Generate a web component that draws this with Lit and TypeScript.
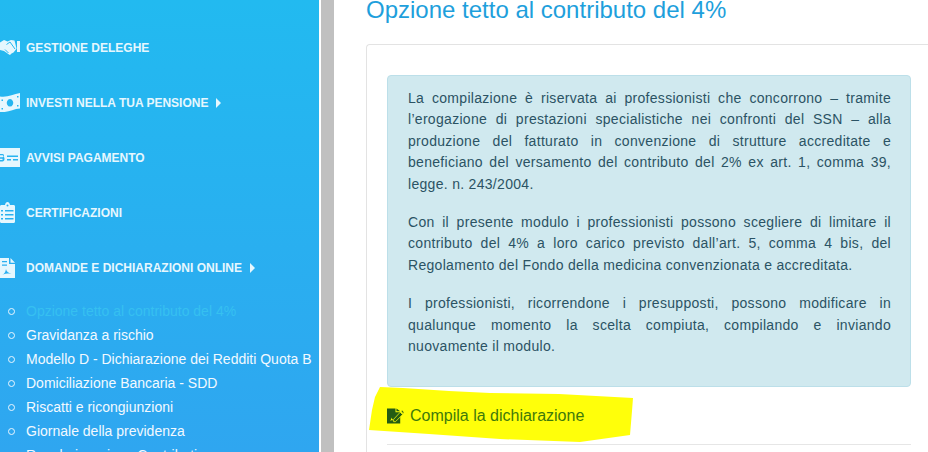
import { LitElement, html, css, svg } from "lit";
import { customElement } from "lit/decorators.js";

const icons: Record<string, unknown> = {
  hands: svg`<path d="M0 2.500 4 0l3.500 1.500L11 0l3.500.5 2 8-1 1.500-2 2.500-2 1-1.500 1.500-1-.5L4 11 0 10z"/><rect x="17" y="1" width="3" height="11"/><path d="M6.500 4.500l3.500-2.500 5 7" fill="none" stroke="#24b8f0" stroke-width="1"/><path d="M5 9.500l3.500 3.500" fill="none" stroke="#24b8f0" stroke-width="1"/>`,
  money: svg`<path fill-rule="evenodd" d="M0 3.500C7 5 13 1 20 0v15.500c-7 .5-13 4.500-20 3.500zM10 6a3.200 3.800 0 1 0 .01 0zM17 3v1.500h1.500V3zM17 12v1.500h1.500V12zM1.500 6.500V8H3V6.500zM1.500 15v1.500H3V15z"/>`,
  bill: svg`<path fill-rule="evenodd" d="M0 0h20v19H0zM7 7.500v1.400h11V7.500zM7 11v1.400h4V11zM13 11v1.400h5V11zM0 6v1.300h2.500c1 0 1 2 0 2H0v1.400h2.500v1.200H0v1.600h2.500c2.500 0 2.500-4 1-5 1-1 .5-2.500-1-2.500z"/>`,
  clip: svg`<path fill-rule="evenodd" d="M1.500 3H5c.5-4 4.500-4 5 0h3.500c1 0 1.500.7 1.500 1.500v15c0 .8-.5 1.500-1.500 1.500h-12C.500 21 0 20.300 0 19.500v-15C0 3.700.500 3 1.500 3zM6.500 3.500a1 1 0 1 0 2 0 1 1 0 1 0-2 0zM1 8v1.500h2V8zM5 8v1.500h8.500V8zM1 12v1.500h2V12zM5 12v1.500h8.500V12zM1 16v1.500h2V16zM5 16v1.500h8.500V16z"/>`,
  pdf: svg`<path fill-rule="evenodd" d="M0 0h9v6h6v14H0zM10.500 0 15 4.800h-4.500zM2 3v1.300h5V3zM2 6.500v1.300h5V6.500zM2 17c2-.5 3.500-3 4-6 .5 2.500 2 4 5.500 4.500-3-.3-6.500 0-9.500 1.500z"/>`,
};

const mainItems = [
  { icon: "hands", label: "Gestione deleghe", arrow: false, h: 15 },
  { icon: "money", label: "Investi nella tua pensione", arrow: true, h: 19 },
  { icon: "bill", label: "Avvisi pagamento", arrow: false, h: 19 },
  { icon: "clip", label: "Certificazioni", arrow: false, h: 21 },
  { icon: "pdf", label: "Domande e dichiarazioni online", arrow: true, h: 20 },
];

const subItems = [
  "Opzione tetto al contributo del 4%",
  "Gravidanza a rischio",
  "Modello D - Dichiarazione dei Redditi Quota B",
  "Domiciliazione Bancaria - SDD",
  "Riscatti e ricongiunzioni",
  "Giornale della previdenza",
  "Regolarizzazione Contributi",
];

@customElement("app-root")
export class AppRoot extends LitElement {
  static styles = css`
    :host {
      display: flex;
      width: 928px;
      height: 452px;
      overflow: hidden;
      background: #fff;
      font-family: "Liberation Sans", Arial, sans-serif;
    }
    .sidebar {
      flex: 0 0 319px;
      height: 452px;
      overflow: hidden;
      box-sizing: border-box;
      padding-top: 20px;
      background: linear-gradient(180deg, #22baf0 0%, #2fa6f0 100%);
    }
    .divider {
      flex: 0 0 13px;
      margin-left: 2px;
      background: #c0c0c0;
    }
    ul { list-style: none; margin: 0; padding: 0; }
    .main {
      display: flex;
      align-items: center;
      height: 55px;
      color: #e6f7fe;
      font-size: 12px;
      font-weight: 700;
      text-transform: uppercase;
    }
    .icon {
      flex: 0 0 20px;
      margin-right: 6px;
      fill: #e6f7fe;
    }
    .arrow {
      width: 0;
      height: 0;
      margin-left: 8px;
      border-left: 5px solid #e6f7fe;
      border-top: 5px solid transparent;
      border-bottom: 5px solid transparent;
    }
    .subs { margin-top: 4px; }
    .sub {
      display: flex;
      align-items: center;
      height: 24px;
      color: #f2f9ff;
      font-size: 14px;
      white-space: nowrap;
    }
    .sub::before {
      content: "";
      box-sizing: border-box;
      flex: none;
      width: 7px;
      height: 7px;
      margin: 0 11px 0 8px;
      border: 1.500px solid #eaf6ff;
      border-radius: 50%;
    }
    .sub.active { color: #36c0f0; }
    .content {
      flex: 1;
      min-width: 0;
      padding-left: 32px;
      box-sizing: border-box;
      overflow: hidden;
    }
    h1 {
      margin: -5px 0 0;
      font-size: 24px;
      line-height: 29px;
      font-weight: 400;
      color: #1e9fdc;
      white-space: nowrap;
    }
    .panel {
      box-sizing: border-box;
      width: 620px;
      margin-top: 20px;
      padding: 30px 0 0 20px;
      border: 1px solid #e3e3e3;
      border-right: 0;
      border-radius: 4px 0 0 0;
      height: 420px;
    }
    .alert {
      box-sizing: border-box;
      width: 524px;
      height: 312px;
      padding: 12px 19px 12px 20px;
      background: #d0e9ef;
      border: 1px solid #bcdfe9;
      border-radius: 4px;
      color: #2b5364;
      font-size: 14px;
      line-height: 21.400px;
      letter-spacing: 0.300px;
    }
    .alert p { margin: 0 0 17px; text-align: justify; }
    .action {
      position: relative;
      width: 524px;
      height: 58px;
      border-bottom: 1px solid #e6e6e6;
      box-sizing: border-box;
      display: flex;
      align-items: center;
      color: #3f7a0a;
      font-size: 16px;
    }
    .marker {
      position: absolute;
      left: -18px;
      top: 0;
      width: 266px;
      height: 56px;
    }
    .action-icon, .action-text { position: relative; }
    .action-icon { width: 17px; height: 16px; margin-right: 6px; fill: #245c14; }
    .pencil { stroke: #ffff0a; stroke-width: 0.800; }
  `;

  render() {
    return html`
      <nav class="sidebar">
        <ul>
          ${mainItems.map(
            (i) => html`<li class="main">
              <svg class="icon" viewBox="0 0 20 ${i.h}" width="20" height=${i.h} preserveAspectRatio="xMinYMid meet">${icons[i.icon]}</svg>
              <span>${i.label}</span>
              ${i.arrow ? html`<span class="arrow"></span>` : null}
            </li>`
          )}
        </ul>
        <ul class="subs">
          ${subItems.map(
            (s, n) => html`<li class="sub ${n === 0 ? "active" : ""}">${s}</li>`
          )}
        </ul>
      </nav>
      <div class="divider"></div>
      <main class="content">
        <h1>Opzione tetto al contributo del 4%</h1>
        <section class="panel">
          <div class="alert">
            <p>La compilazione è riservata ai professionisti che concorrono – tramite l’erogazione di prestazioni specialistiche nei confronti del SSN – alla produzione del fatturato in convenzione di strutture accreditate e beneficiano del versamento del contributo del 2% ex art. 1, comma 39, legge. n. 243/2004.</p>
            <p>Con il presente modulo i professionisti possono scegliere di limitare il contributo del 4% a loro carico previsto dall’art. 5, comma 4 bis, del Regolamento del Fondo della medicina convenzionata e accreditata.</p>
            <p>I professionisti, ricorrendone i presupposti, possono modificare in qualunque momento la scelta compiuta, compilando e inviando nuovamente il modulo.</p>
          </div>
          <div class="action">
            <svg class="marker" viewBox="0 0 266 56" preserveAspectRatio="none">
              <path fill="#ffff0a" d="M11 0 34 1 80 4 121 6 190 7 264 11 263 24 261 48 211 55 131 52 60 47 0 43 3 23 6 10z"/>
            </svg>
            <svg class="action-icon" viewBox="0 0 18 16">
              <path d="M0 0h9v4h5v12H0zM10 0l4 3h-4z"/>
              <path fill="#ffff0a" d="M2 13.500c1.500-.5 2.500-2 3-4 .3 1.500 1 2.500 2.500 3-2-.2-4 0-5.500 1z"/>
              <path class="pencil" d="M7 11.500l7-7.500 2.500 2.500-7.500 7.500H7zM15 3l1-1 2 2-1 1.500z"/>
            </svg>
            <span class="action-text">Compila la dichiarazione</span>
          </div>
        </section>
      </main>
    `;
  }
}
